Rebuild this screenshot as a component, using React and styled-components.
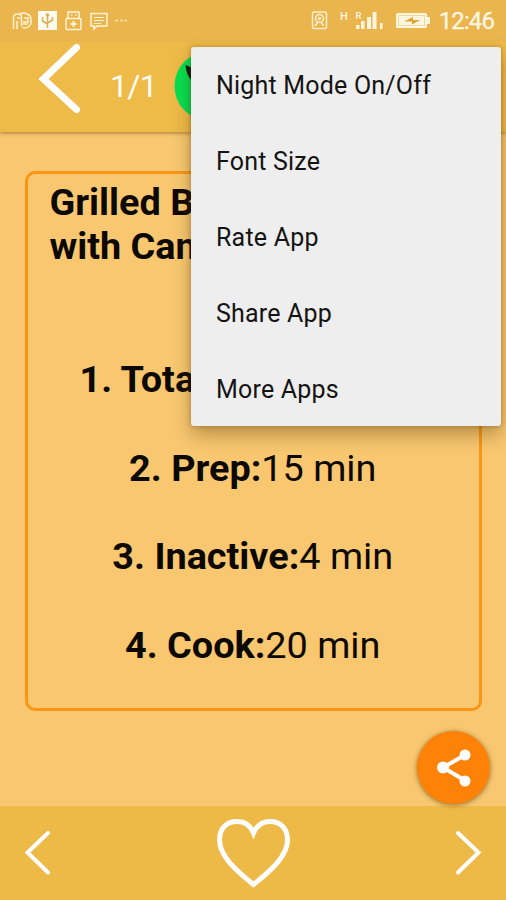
import React from 'react';
import styled, { createGlobalStyle } from 'styled-components';

const GlobalStyle = createGlobalStyle`
  * {
    box-sizing: border-box;
  }
  body {
    margin: 0;
    font-family: Roboto, sans-serif;
    background-color: #f8c770;
  }
`;

const StyledPage = styled.div`
  position: relative;
  width: 506px;
  height: 900px;
  display: flex;
  flex-direction: column;
  overflow: hidden;
  background-color: #f8c770;
`;

const StyledStatusBar = styled.div`
  position: relative;
  z-index: 1;
  height: 42px;
  flex: none;
  display: flex;
  align-items: center;
  padding: 0 12px 0 11px;
  background-color: #eab54c;
  color: #fff6e2;
  svg {
    display: block;
    flex: none;
  }
`;

const StyledStatusGroup = styled.div`
  display: flex;
  align-items: center;
  gap: ${({ $gap }) => $gap}px;
  margin-left: ${({ $end }) => ($end ? 'auto' : 0)};
`;

const StyledClock = styled.span`
  font-size: 24px;
  line-height: 42px;
  letter-spacing: -0.9px;
  -webkit-text-stroke: 0.3px #fff6e2;
`;

const StyledToolbar = styled.header`
  position: relative;
  height: 90px;
  flex: none;
  display: flex;
  align-items: flex-start;
  padding-left: 37px;
  background-color: #eeba48;
  box-shadow: 0 1px 4px rgba(90, 60, 0, 0.55);
  color: #fffdf5;
`;

const StyledCounter = styled.span`
  width: 64px;
  margin-top: 24px;
  margin-left: 29px;
  font-size: 32px;
  line-height: 40px;
  letter-spacing: -0.7px;
  white-space: nowrap;
`;

const StyledContent = styled.main`
  flex: 1;
  padding: 39px 24px 0 25px;
`;

const StyledCard = styled.section`
  height: 540px;
  padding: 6px 23px 0 21.5px;
  border: 3px solid #fa9614;
  border-radius: 10px;
  color: #0c0803;
  font-size: 37.8px;
  line-height: 44.25px;
`;

const StyledTitle = styled.h1`
  margin: 0 0 88.5px;
  font-size: inherit;
  font-weight: 700;
  white-space: pre-line;
`;

const StyledStep = styled.p`
  margin: 0 0 44.25px;
  padding-left: ${({ $indent }) => $indent || 0}px;
  text-align: ${({ $indent }) => ($indent ? 'left' : 'center')};
  white-space: nowrap;
`;

const StyledFooter = styled.footer`
  height: 94px;
  flex: none;
  display: flex;
  align-items: center;
  justify-content: space-between;
  padding: 0 23px;
  background-color: #eeba47;
`;

const StyledShareButton = styled.button`
  position: absolute;
  top: 731px;
  left: 417px;
  width: 73px;
  height: 73px;
  display: flex;
  align-items: center;
  justify-content: center;
  padding: 0;
  border: none;
  border-radius: 50%;
  background-color: #ff8208;
  box-shadow: 0 1px 5px rgba(90, 60, 0, 0.65);
`;

const StyledMenu = styled.ul`
  position: absolute;
  z-index: 2;
  top: 47px;
  left: 191px;
  width: 310px;
  height: 379px;
  margin: 0;
  padding: 0;
  list-style: none;
  border-radius: 3px;
  background-color: #eee;
  box-shadow: 0 9px 18px rgba(80, 50, 0, 0.36), 0 0 4px rgba(80, 50, 0, 0.35);
`;

const StyledMenuItem = styled.li`
  height: 76px;
  padding-left: 25px;
  font-size: 25px;
  line-height: 77px;
  letter-spacing: 0.2px;
  color: #141414;
`;

const menuItems = [
  'Night Mode On/Off',
  'Font Size',
  'Rate App',
  'Share App',
  'More Apps',
];

const steps = [
  { label: '1. Total', indent: 30 },
  { label: '2. Prep:', value: '15 min' },
  { label: '3. Inactive:', value: '4 min' },
  { label: '4. Cook:', value: '20 min' },
];

const Chevron = ({ width, height, stroke, points }) => (
  <svg width={width} height={height} fill='none' stroke='#fff'>
    <polyline
      points={points}
      strokeWidth={stroke}
      strokeLinecap='round'
      strokeLinejoin='miter'
    />
  </svg>
);

const NotificationIcons = () => (
  <svg width='118' height='24' fill='none' stroke='#fff3d8' strokeWidth='1.5'>
    <path d='M2.5 20V9q0-4 4-4q4 0 4 3v9M6 20v-8M6 9h3' />
    <path d='M9 5q4-2 7 0q4 1 4 6q1 5-3 7q-3 2-6 0M13 9h4v4h-5M12 15h5' />
    <rect x='27' y='2' width='19' height='19' fill='#fffaf0' stroke='none' />
    <path d='M36.5 19V6M36.5 15l-5-3V8M36.5 14l5-3V8' stroke='#d7ae50' />
    <circle cx='36.5' cy='6' r='1.7' fill='#d7ae50' stroke='none' />
    <path d='M57 9.500V3h11v6.500M60 6h1.500M64 6h1.500' />
    <rect x='55' y='9.500' width='15' height='11' rx='1' />
    <path d='M62.500 12v6M59.500 15h6' strokeWidth='2' />
    <path d='M80 4.500h16v12.500H86l-3 3v-3h-3z' />
    <path d='M83 8.500h10M83 11.500h10M83 14.500h7' strokeWidth='1.200' />
    <path d='M104 11.500h3M109 11.500h3M113.500 11.500h2.500' opacity='0.8' />
  </svg>
);

const SignalIcons = () => (
  <svg width='120' height='24' fill='#fff6e0'>
    <g fill='none' stroke='#fff0cf' strokeWidth='1.5'>
      <rect x='1.500' y='3' width='14' height='16.500' rx='1.500' />
      <circle cx='8.500' cy='9.500' r='4' />
      <circle cx='8.500' cy='9.500' r='1' />
      <path d='M7 13l-3 4M10 13l2.500 4' />
    </g>
    <text x='29' y='11' fontSize='11' fontWeight='500'>
      H
    </text>
    <text x='44.500' y='10' fontSize='9.500' fontWeight='500'>
      R
    </text>
    <rect x='45' y='16' width='3.500' height='4' />
    <rect x='50' y='12' width='3.500' height='8' />
    <rect x='56' y='8' width='4' height='12' />
    <rect x='61.500' y='3' width='4' height='17' />
    <rect x='69' y='14' width='2.500' height='6' />
    <rect x='85' y='4' width='31' height='15' rx='1.500' />
    <path d='M116 8h3v7h-3z' />
    <rect x='87.500' y='6.500' width='26' height='10' fill='none' stroke='#f0d8a0' />
    <path d='M93 12.500l9-4.500v3h7l-8 4.500v-3z' fill='#dfa32c' />
  </svg>
);

const LogoIcon = () => (
  <svg width='84' height='90'>
    <circle cx='35.500' cy='44' r='35' fill='#06df50' />
    <path d='M11.500 23q4 2 8 3v14q-7-5-8-17z' fill='#0b1a0c' />
  </svg>
);

const App = () => (
  <>
    <GlobalStyle />
    <StyledPage>
      <StyledStatusBar>
        <StyledStatusGroup $gap={0}>
          <NotificationIcons />
        </StyledStatusGroup>
        <StyledStatusGroup $gap={8} $end>
          <SignalIcons />
          <StyledClock>12:46</StyledClock>
        </StyledStatusGroup>
      </StyledStatusBar>
      <StyledToolbar>
        <Chevron width={44} height={80} stroke={7} points='39.500,5.500 6.500,37 39.500,67.500' />
        <StyledCounter>1/1</StyledCounter>
        <LogoIcon />
      </StyledToolbar>
      <StyledContent>
        <StyledCard>
          <StyledTitle>{'Grilled B\nwith Can'}</StyledTitle>
          {steps.map(({ label, value, indent }) => (
            <StyledStep key={label} $indent={indent}>
              <b>{label}</b>
              {value}
            </StyledStep>
          ))}
        </StyledCard>
      </StyledContent>
      <StyledFooter>
        <Chevron width={30} height={50} stroke={4} points='25,5 4.500,24.500 25,44.500' />
        <svg width='76' height='72' fill='none' stroke='#fff' strokeWidth='5'>
          <path d='M38.500 67.500C26 57 4.500 41 4.500 23C4.500 11 12 4.500 22 4.500C30 4.500 35.500 9 38.500 16C41.500 9 47 4.500 55 4.500C65 4.500 72.500 11 72.500 23C72.500 41 51 57 38.500 67.500z' />
        </svg>
        <Chevron width={30} height={50} stroke={4} points='5,5 25.500,24.500 5,44.500' />
      </StyledFooter>
      <StyledShareButton>
        <svg width='36' height='40' fill='#fff' stroke='#fff'>
          <path d='M29 7L7 19.500l22 13' fill='none' strokeWidth='4' />
          <circle cx='29' cy='7' r='5.500' stroke='none' />
          <circle cx='7' cy='19.500' r='6' stroke='none' />
          <circle cx='29' cy='33' r='5.500' stroke='none' />
        </svg>
      </StyledShareButton>
      <StyledMenu>
        {menuItems.map((item) => (
          <StyledMenuItem key={item}>{item}</StyledMenuItem>
        ))}
      </StyledMenu>
    </StyledPage>
  </>
);

export default App;
